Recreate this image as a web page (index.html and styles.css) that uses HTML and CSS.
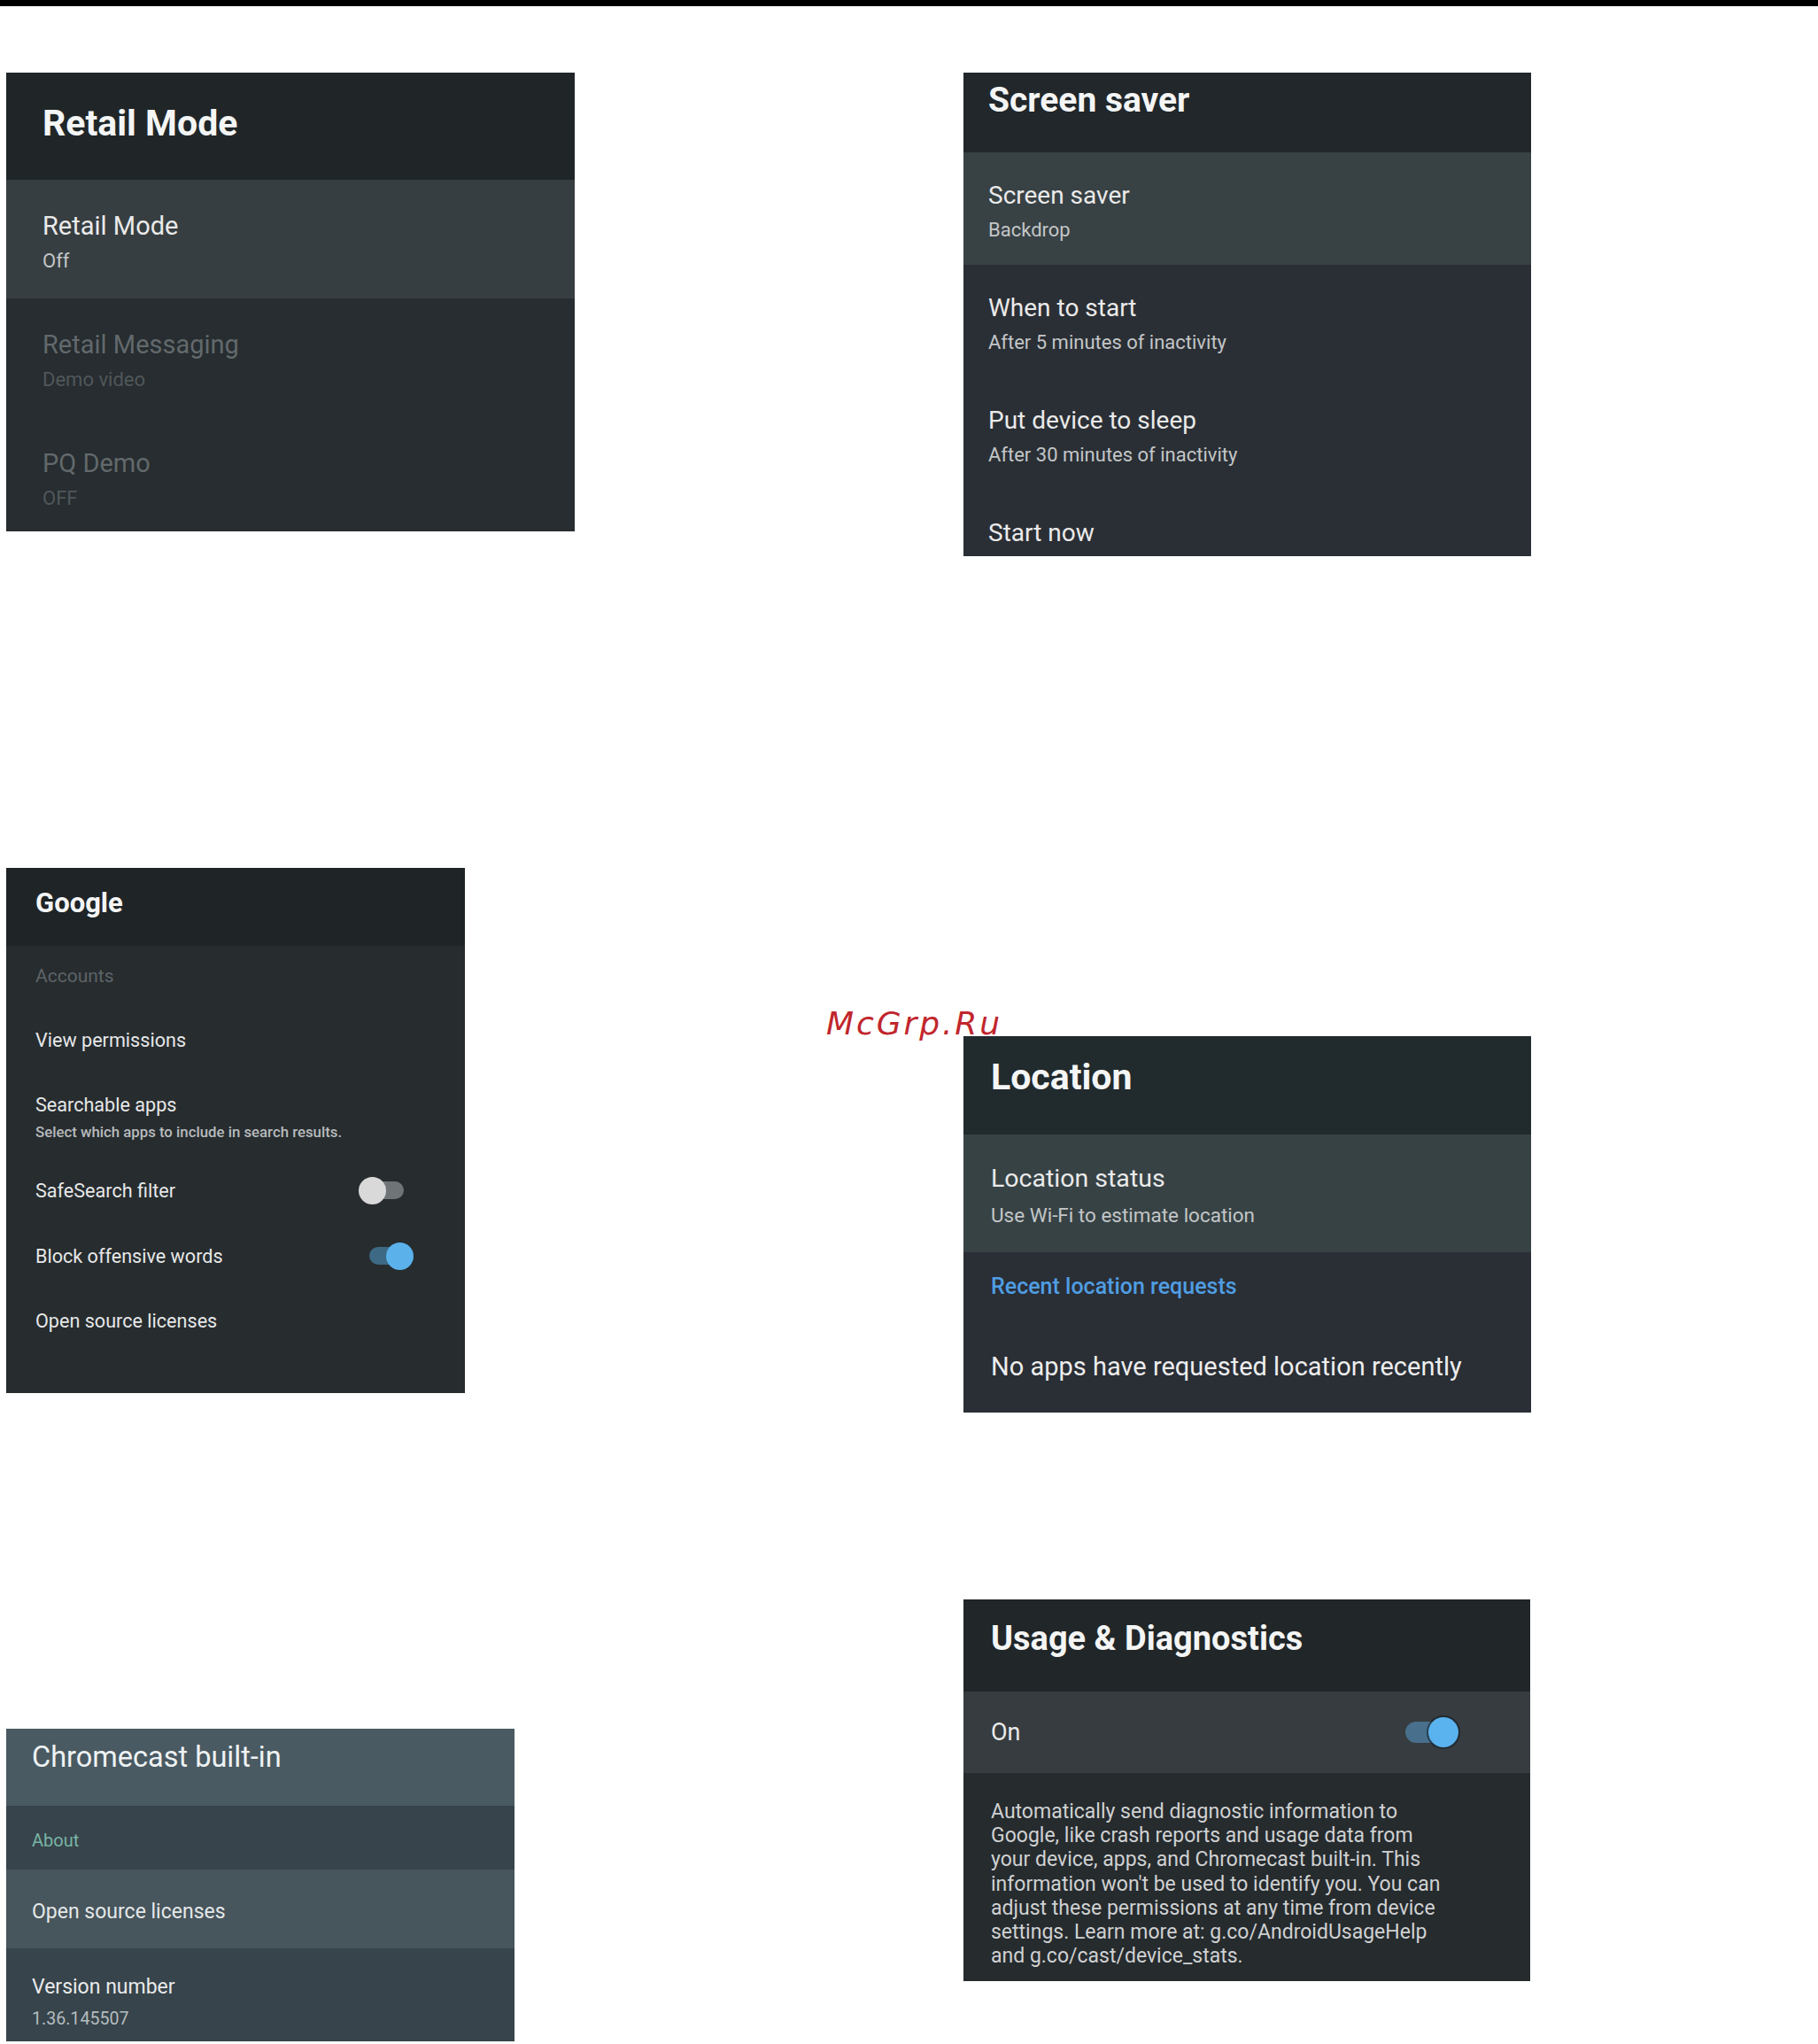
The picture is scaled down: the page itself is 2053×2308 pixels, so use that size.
FILE: index.html
```html
<!DOCTYPE html>
<html lang="en">
<head>
<meta charset="UTF-8" />
<meta name="viewport" content="width=device-width, initial-scale=1" />
<title>TV Settings Screens</title>
<link rel="stylesheet" href="styles.css">
</head>
<body>

<div class="topbar"></div>

<main class="sheet">
  <div class="col col-left">

    <section class="panel retail">
      <div class="head"><h2>Retail Mode</h2></div>
      <div class="row selected">
        <div class="title">Retail Mode</div>
        <div class="sub">Off</div>
      </div>
      <div class="row disabled">
        <div class="title">Retail Messaging</div>
        <div class="sub">Demo video</div>
      </div>
      <div class="row disabled">
        <div class="title">PQ Demo</div>
        <div class="sub">OFF</div>
      </div>
    </section>

    <section class="panel google">
      <div class="head"><h2>Google</h2></div>
      <div class="list">
        <div class="item category">Accounts</div>
        <div class="item">View permissions</div>
        <div class="item">
          Searchable apps
          <div class="hint">Select which apps to include in search results.</div>
        </div>
        <div class="item toggle-row first-toggle">
          <span>SafeSearch filter</span>
          <span class="switch"><span class="knob"></span></span>
        </div>
        <div class="item toggle-row">
          <span>Block offensive words</span>
          <span class="switch on"><span class="knob"></span></span>
        </div>
        <div class="item">Open source licenses</div>
      </div>
    </section>

    <section class="panel cast">
      <div class="head"><h2>Chromecast built-in</h2></div>
      <div class="row about">About</div>
      <div class="row licenses">Open source licenses</div>
      <div class="row version">
        <div class="title">Version number</div>
        <div class="sub">1.36.145507</div>
      </div>
    </section>

  </div>

  <div class="col col-right">

    <section class="panel saver">
      <div class="head"><h2>Screen saver</h2></div>
      <div class="row selected">
        <div class="title">Screen saver</div>
        <div class="sub">Backdrop</div>
      </div>
      <div class="row">
        <div class="title">When to start</div>
        <div class="sub">After 5 minutes of inactivity</div>
      </div>
      <div class="row">
        <div class="title">Put device to sleep</div>
        <div class="sub">After 30 minutes of inactivity</div>
      </div>
      <div class="row last">
        <div class="title">Start now</div>
      </div>
    </section>

    <section class="panel location">
      <span class="watermark">McGrp.Ru</span>
      <div class="head"><h2>Location</h2></div>
      <div class="row selected">
        <div class="title">Location status</div>
        <div class="sub">Use Wi-Fi to estimate location</div>
      </div>
      <div class="body">
        <div class="link">Recent location requests</div>
        <div class="note">No apps have requested location recently</div>
      </div>
    </section>

    <section class="panel usage">
      <div class="head"><h2>Usage &amp; Diagnostics</h2></div>
      <div class="row selected">
        <span>On</span>
        <span class="switch big on"><span class="knob"></span></span>
      </div>
      <p class="info">
        Automatically send diagnostic information to<br>
        Google, like crash reports and usage data from<br>
        your device, apps, and Chromecast built-in. This<br>
        information won't be used to identify you. You can<br>
        adjust these permissions at any time from device<br>
        settings. Learn more at: g.co/AndroidUsageHelp<br>
        and g.co/cast/device_stats.
      </p>
    </section>

  </div>
</main>

</body>
</html>
```

FILE: styles.css
```css
body {
  margin: 0;
  background: #fff;
  font-family: Roboto, 'Noto Sans', sans-serif;
  color: #e8eaeb;
}
.topbar {
  height: 7px;
  background: #000;
}
.sheet {
  display: grid;
  grid-template-columns: 1088px 1fr;
}
.col-left {
  padding-left: 7px;
}
.panel {
  position: relative;
  overflow: hidden;
}
.panel h2 {
  margin: 0;
  font-weight: 700;
  color: #f4f5f5;
}
.row {
  box-sizing: border-box;
}
.title {
  color: #eaeaea;
}
.sub {
  color: #c3c6c7;
}

/* Retail Mode */
.retail {
  width: 642px;
  margin-top: 75px;
  background: #272d30;
}
.retail .head {
  height: 121px;
  box-sizing: border-box;
  padding: 33px 41px 0;
  background: #202628;
}
.retail h2 {
  font-size: 41px;
  line-height: 48px;
}
.retail .row {
  height: 134px;
  padding: 35px 41px 0;
}
.retail .row:last-child {
  height: 129px;
}
.retail .title {
  font-size: 29px;
  line-height: 34px;
}
.retail .sub {
  margin-top: 9px;
  font-size: 22px;
  line-height: 28px;
}
.retail .selected {
  background: #373e41;
}
.retail .disabled .title {
  color: #62696c;
}
.retail .disabled .sub {
  color: #50575a;
}

/* Google */
.google {
  width: 518px;
  margin-top: 380px;
  background: #272c2f;
}
.google .head {
  height: 88px;
  box-sizing: border-box;
  padding: 21px 33px 0;
  background: #1f2427;
}
.google h2 {
  font-size: 31px;
  line-height: 38px;
}
.google .list {
  height: 505px;
  box-sizing: border-box;
  padding: 19px 0 0 33px;
  display: flex;
  flex-direction: column;
  gap: 43px;
}
.google .item {
  font-size: 21.6px;
  line-height: 30px;
  color: #e6e8e8;
}
.google .category {
  font-size: 21px;
  color: #5d6467;
}
.google .hint {
  margin-top: 4px;
  font-size: 16.8px;
  line-height: 22px;
  font-weight: 500;
  color: #b7bbbd;
}
.google .first-toggle {
  margin-top: -3px;
}
.toggle-row {
  display: flex;
  justify-content: space-between;
  align-items: center;
}
.switch {
  position: relative;
  flex: none;
  width: 51px;
  height: 31px;
  margin-right: 69px;
}
.switch::before {
  content: '';
  position: absolute;
  left: 7px;
  right: 0;
  top: 5px;
  height: 20px;
  border-radius: 10px;
  background: #6f7477;
}
.switch .knob {
  position: absolute;
  left: 0;
  top: 0;
  width: 31px;
  height: 31px;
  border-radius: 50%;
  background: #d9d9d9;
}
.switch.on {
  width: 50px;
  margin-right: 58px;
}
.switch.on::before {
  left: 0;
  right: 8px;
  background: #3d6985;
}
.switch.on .knob {
  left: auto;
  right: 0;
  background: #5bb1ea;
}

/* Chromecast built-in */
.cast {
  width: 574px;
  margin-top: 379px;
}
.cast .head {
  height: 87px;
  box-sizing: border-box;
  padding: 13px 29px 0;
  background: #4a5a62;
}
.cast h2 {
  font-size: 32.5px;
  line-height: 38px;
  font-weight: 400;
  color: #eef2f3;
}
.cast .row {
  padding-left: 29px;
}
.cast .about {
  height: 72px;
  padding-top: 27px;
  font-size: 20px;
  line-height: 24px;
  color: #78b5a5;
  background: #37444b;
}
.cast .licenses {
  height: 89px;
  padding-top: 34px;
  font-size: 23px;
  line-height: 28px;
  color: #e4e8e9;
  background: #47555c;
}
.cast .version {
  height: 105px;
  padding-top: 30px;
  background: #37444b;
}
.cast .title {
  font-size: 23px;
  line-height: 28px;
}
.cast .sub {
  margin-top: 11px;
  font-size: 19.6px;
  line-height: 22px;
  color: #b4bcbf;
}

/* Screen saver */
.saver {
  width: 641px;
  margin-top: 75px;
  background: #2a2f35;
}
.saver .head {
  height: 90px;
  box-sizing: border-box;
  padding: 9px 28px 0;
  background: #21272a;
}
.saver h2 {
  font-size: 39px;
  line-height: 44px;
}
.saver .row {
  height: 127px;
  padding: 33px 28px 0;
}
.saver .row.last {
  height: 75px;
}
.saver .title {
  font-size: 28px;
  line-height: 32px;
}
.saver .sub {
  margin-top: 10px;
  font-size: 22px;
  line-height: 26px;
}
.saver .selected {
  background: #384144;
}

/* Location */
.location {
  width: 641px;
  margin-top: 542px;
  overflow: visible;
  background: #2a2e35;
}
.watermark {
  position: absolute;
  left: -155px;
  top: -32px;
  font-family: 'DejaVu Sans', sans-serif;
  font-style: italic;
  font-size: 36px;
  line-height: 36px;
  letter-spacing: 2.9px;
  color: #c1262d;
  white-space: nowrap;
}
.location .head {
  height: 111px;
  box-sizing: border-box;
  padding: 23px 31px 0;
  background: #212a2d;
}
.location h2 {
  font-size: 41px;
  line-height: 46px;
}
.location .selected {
  height: 133px;
  padding: 34px 31px 0;
  background: #374245;
}
.location .title {
  font-size: 28.5px;
  line-height: 32px;
}
.location .sub {
  margin-top: 12px;
  font-size: 22.5px;
  line-height: 26px;
}
.location .body {
  height: 181px;
  box-sizing: border-box;
  padding: 24px 31px 0;
}
.location .link {
  font-size: 25px;
  line-height: 30px;
  font-weight: 500;
  color: #4f9de2;
}
.location .note {
  margin-top: 59px;
  font-size: 29px;
  line-height: 32px;
  color: #eceded;
}

/* Usage & Diagnostics */
.usage {
  width: 640px;
  margin-top: 211px;
  background: #262b2e;
}
.usage .head {
  height: 104px;
  box-sizing: border-box;
  padding: 22px 31px 0;
  background: #212628;
}
.usage h2 {
  font-size: 38px;
  line-height: 44px;
}
.usage .selected {
  height: 92px;
  padding-left: 31px;
  display: flex;
  justify-content: space-between;
  align-items: center;
  font-size: 27px;
  line-height: 32px;
  color: #eaeaea;
  background: #363c3f;
}
.switch.big {
  width: 60px;
  height: 34px;
  margin-right: 81px;
}
.switch.big::before {
  left: 0;
  right: 10px;
  top: 5px;
  height: 24px;
  border-radius: 12px;
  background: #486f8c;
}
.switch.big .knob {
  width: 34px;
  height: 34px;
  background: #5ab3ee;
  box-shadow: 0 0 0 2px rgba(20, 30, 40, 0.6);
}
.usage .info {
  height: 235px;
  box-sizing: border-box;
  margin: 0;
  padding: 30px 31px 0;
  font-size: 23px;
  line-height: 27.2px;
  color: #cfd1d2;
}
```
